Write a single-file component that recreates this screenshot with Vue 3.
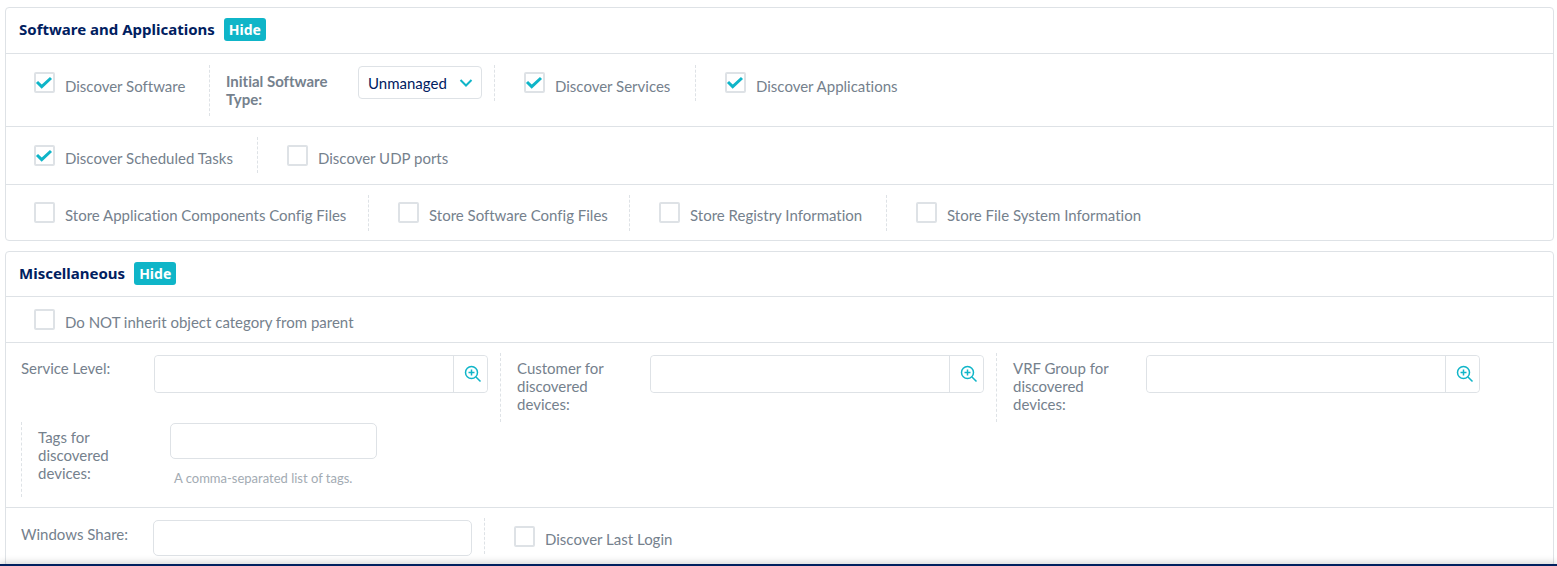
<script setup>
import { ref, reactive } from 'vue'

const softwareRows = reactive([
  {
    name: 'software',
    cells: [
      { id: 'software', label: 'Discover Software', checked: true },
      { id: 'type', select: true },
      { id: 'services', label: 'Discover Services', checked: true },
      { id: 'applications', label: 'Discover Applications', checked: true },
    ],
  },
  {
    name: 'tasks',
    cells: [
      { id: 'tasks', label: 'Discover Scheduled Tasks', checked: true },
      { id: 'udp', label: 'Discover UDP ports', checked: false },
    ],
  },
  {
    name: 'store',
    cells: [
      { id: 'components', label: 'Store Application Components Config Files', checked: false },
      { id: 'config', label: 'Store Software Config Files', checked: false },
      { id: 'registry', label: 'Store Registry Information', checked: false },
      { id: 'filesystem', label: 'Store File System Information', checked: false },
    ],
  },
])

const lookups = reactive([
  { id: 'service-level', label: 'Service Level:', value: '' },
  { id: 'customer', label: 'Customer for discovered devices:', value: '' },
  { id: 'vrf', label: 'VRF Group for discovered devices:', value: '' },
])

const softwareType = ref('Unmanaged')
const noInherit = ref(false)
const lastLogin = ref(false)
const tags = ref('')
const share = ref('')
const showSoftware = ref(true)
const showMisc = ref(true)
</script>

<template>
  <main class="page">
    <section class="panel">
      <header class="panel-head">
        <h2>Software and Applications</h2>
        <button type="button" class="toggle" @click="showSoftware = !showSoftware">{{ showSoftware ? 'Hide' : 'Show' }}</button>
      </header>
      <template v-if="showSoftware">
        <div v-for="row in softwareRows" :key="row.name" class="row" :class="'row-' + row.name">
          <template v-for="cell in row.cells" :key="cell.id">
            <div v-if="cell.select" class="cell field">
              <label class="field-label strong" for="software-type">Initial Software Type:</label>
              <div class="select-wrap">
                <select id="software-type" v-model="softwareType">
                  <option>Unmanaged</option>
                  <option>Managed</option>
                </select>
                <svg class="chevron" viewBox="0 0 14 10" aria-hidden="true"><path d="M1.5 2 L7 7.5 L12.5 2" /></svg>
              </div>
            </div>
            <label v-else class="cell check">
              <span class="box">
                <input v-model="cell.checked" type="checkbox" />
                <svg v-if="cell.checked" viewBox="0 0 21 21" aria-hidden="true"><path d="M3 10 L7.7 14.6 L17 6" /></svg>
              </span>
              <span class="check-text">{{ cell.label }}</span>
            </label>
          </template>
        </div>
      </template>
    </section>

    <section class="panel">
      <header class="panel-head compact">
        <h2>Miscellaneous</h2>
        <button type="button" class="toggle" @click="showMisc = !showMisc">{{ showMisc ? 'Hide' : 'Show' }}</button>
      </header>
      <template v-if="showMisc">
        <div class="row row-inherit">
          <label class="cell check">
            <span class="box">
              <input v-model="noInherit" type="checkbox" />
              <svg v-if="noInherit" viewBox="0 0 21 21" aria-hidden="true"><path d="M3 10 L7.7 14.6 L17 6" /></svg>
            </span>
            <span class="check-text">Do NOT inherit object category from parent</span>
          </label>
        </div>
        <div class="row row-fields">
          <div v-for="item in lookups" :key="item.id" class="cell field">
            <label class="field-label" :for="item.id">{{ item.label }}</label>
            <div class="lookup">
              <input :id="item.id" v-model="item.value" type="text" />
              <button type="button" :aria-label="'Search ' + item.label">
                <svg viewBox="0 0 18 18" aria-hidden="true">
                  <circle cx="7.5" cy="7.5" r="6" />
                  <path d="M4.5 7.5 H10.5 M7.5 4.5 V10.5 M12 12 L16.5 16.5" />
                </svg>
              </button>
            </div>
          </div>
          <div class="cell field tags">
            <label class="field-label" for="tags">Tags for discovered devices:</label>
            <div>
              <input id="tags" v-model="tags" class="text-input" type="text" aria-describedby="tags-hint" />
              <p id="tags-hint" class="hint">A comma-separated list of tags.</p>
            </div>
          </div>
        </div>
        <div class="row row-share">
          <div class="cell field">
            <label class="field-label" for="share">Windows Share:</label>
            <input id="share" v-model="share" class="text-input" type="text" />
          </div>
          <label class="cell check">
            <span class="box">
              <input v-model="lastLogin" type="checkbox" />
              <svg v-if="lastLogin" viewBox="0 0 21 21" aria-hidden="true"><path d="M3 10 L7.7 14.6 L17 6" /></svg>
            </span>
            <span class="check-text">Discover Last Login</span>
          </label>
        </div>
      </template>
    </section>
    <footer class="bottom-bar"></footer>
  </main>
</template>

<style>
body {
  margin: 0;
  background: #fff;
}
</style>

<style scoped>
* {
  box-sizing: border-box;
}
.page {
  height: 100vh;
  overflow: hidden;
  padding: 7px 3px 0 5px;
  font-family: Lato, "Liberation Sans", sans-serif;
  font-size: 15px;
  line-height: 18px;
  font-variant-ligatures: none;
  color: #75818d;
}
.panel {
  border: 1px solid #dee2e6;
  border-radius: 4px;
  margin-bottom: 10px;
}
.panel-head {
  display: flex;
  align-items: flex-start;
  gap: 9px;
  height: 45px;
  padding: 10px 0 0 13px;
}
.compact {
  height: 44px;
}
h2 {
  margin: 0;
  font: 700 15px/23px "Noto Sans", sans-serif;
  color: #00205f;
}
.toggle {
  height: 23px;
  padding: 0 5px;
  border: 0;
  border-radius: 3px;
  background: #0fb5c8;
  color: #fff;
  font: 700 14px/22px "Noto Sans", sans-serif;
  cursor: pointer;
}
.row {
  display: flex;
  flex-wrap: wrap;
  align-items: flex-start;
  padding: 10px 0;
  border-top: 1px solid #dee2e6;
}
.cell {
  display: flex;
  align-items: flex-start;
  min-height: 36px;
}
.cell + .cell {
  border-left: 1px dashed #dee2e6;
}
.check {
  gap: 10px;
  padding: 7px 0 0 28px;
}
.cell + .check {
  padding-left: 29px;
}
.check-text {
  margin-top: 4px;
  white-space: nowrap;
}
.box {
  position: relative;
  width: 21px;
  height: 21px;
}
.box input {
  appearance: none;
  display: block;
  width: 21px;
  height: 21px;
  margin: 0;
  border: 2px solid #dee2e6;
  border-radius: 2px;
  background: #fff;
}
.box svg {
  position: absolute;
  inset: 0;
  pointer-events: none;
}
svg {
  fill: none;
  stroke: #0fb5c8;
}
.box path {
  stroke-width: 3;
}
.field {
  padding: 2px 12px 0 15px;
}
.cell + .field {
  padding-left: 16px;
}
.field-label {
  width: 133px;
  padding: 4px 20px 0 0;
}
.field-label.strong {
  padding-top: 6px;
  font-weight: 700;
}
.select-wrap {
  position: relative;
}
select {
  appearance: none;
  display: block;
  width: 124px;
  height: 33px;
  padding: 0 9px;
  border: 1px solid #dee2e6;
  border-radius: 4px;
  background: #fff;
  color: #00205f;
  font: inherit;
}
.chevron {
  position: absolute;
  right: 9px;
  top: 12px;
  width: 14px;
  height: 10px;
  stroke-width: 2;
  pointer-events: none;
}
.row-software,
.row-tasks,
.row-store {
  display: grid;
}
.row-software {
  grid-template-columns: 203px 285px 201px auto;
  padding-top: 11px;
}
.row-software .field {
  min-height: 51px;
  padding-top: 1px;
}
.row-software .check-text {
  margin-top: 5px;
}
.row-tasks {
  grid-template-columns: 251px auto;
  padding-bottom: 11px;
}
.row-tasks .check,
.row-share .check {
  padding-top: 8px;
}
.row-store {
  grid-template-columns: 362px 261px 257px auto;
  padding-bottom: 9px;
}
.row-inherit {
  padding: 5px 0 4px;
}
.row-fields .field {
  min-height: 69px;
}
.row-fields .field:first-child {
  width: 494px;
}
.lookup {
  display: flex;
  width: 334px;
  height: 38px;
  border: 1px solid #dee2e6;
  border-radius: 4px;
}
.lookup input {
  flex: 1;
  min-width: 0;
  padding: 0 10px;
  border: 0;
  border-radius: 4px;
  background: #fff;
  font: inherit;
}
.lookup button {
  width: 34px;
  padding: 0 0 0 5px;
  border: 0;
  border-left: 1px solid #dee2e6;
  border-radius: 0 4px 4px 0;
  background: #fff;
  cursor: pointer;
}
.lookup svg {
  display: block;
  width: 18px;
  height: 18px;
  margin: 0 auto;
  stroke-width: 1.5;
}
.row-fields .tags {
  min-height: 75px;
  margin-left: 15px;
  padding-top: 1px;
}
.tags .field-label,
.row-share .field-label {
  width: 132px;
  padding-top: 5px;
}
.text-input {
  display: block;
  width: 207px;
  height: 36px;
  padding: 0 10px;
  border: 1px solid #dee2e6;
  border-radius: 5px;
  background: #fff;
  font: inherit;
}
.row-share .text-input {
  width: 319px;
}
.hint {
  margin: 10px 0 0 4px;
  font-size: 13px;
  color: #a3abb3;
}
.bottom-bar {
  position: fixed;
  inset: auto 0 0 0;
  height: 2px;
  background: #00205f;
  box-shadow: 0 0 7px rgba(0, 0, 0, 0.5);
}
</style>
